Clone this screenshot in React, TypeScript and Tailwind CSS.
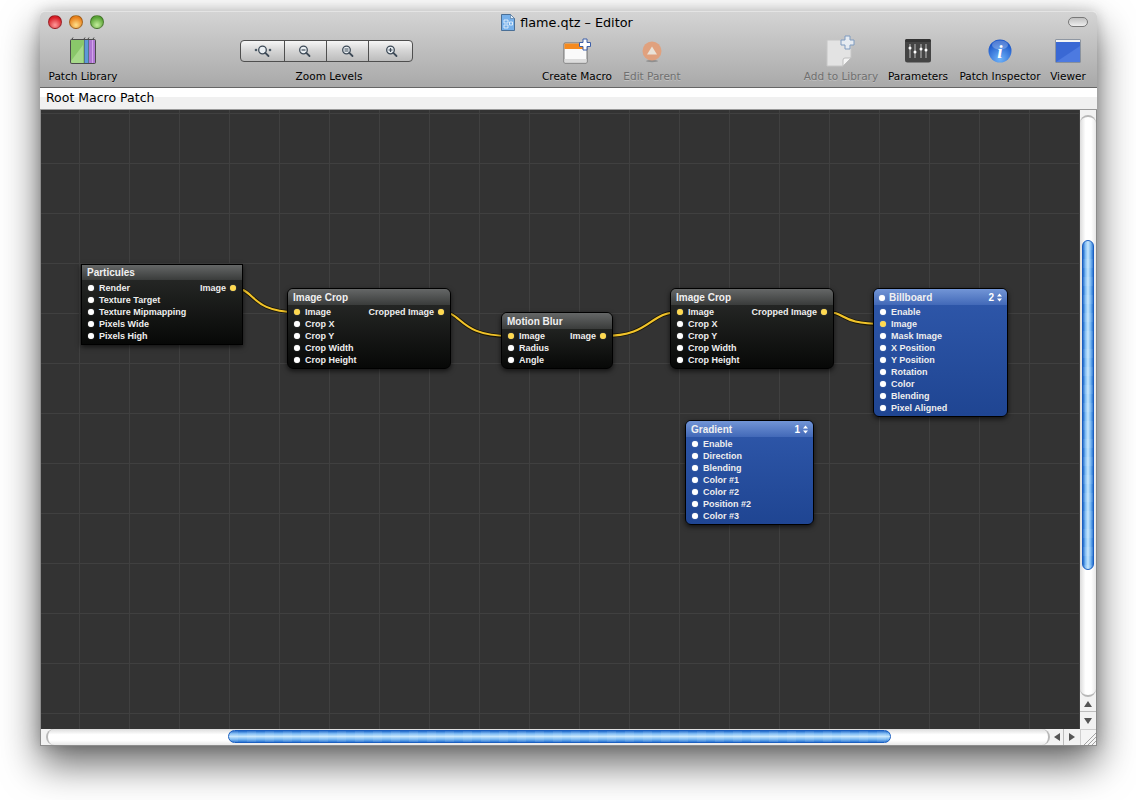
const uiFont = "[font-family:'DejaVu_Sans',sans-serif]";

type PatchNode = {
  title: string;
  pos: string;
  blue?: boolean;
  square?: boolean;
  titleDot?: boolean;
  badge?: string;
  inputs: string[];
  hotInputs?: string[];
  output?: string;
};

const nodes: PatchNode[] = [
  {
    title: "Particules",
    pos: "left-[40px] top-[154px] w-[162px] h-[81px]",
    square: true,
    inputs: ["Render", "Texture Target", "Texture Mipmapping", "Pixels Wide", "Pixels High"],
    output: "Image",
  },
  {
    title: "Image Crop",
    pos: "left-[246px] top-[178px] w-[164px] h-[81px]",
    inputs: ["Image", "Crop X", "Crop Y", "Crop Width", "Crop Height"],
    hotInputs: ["Image"],
    output: "Cropped Image",
  },
  {
    title: "Motion Blur",
    pos: "left-[460px] top-[202px] w-[112px] h-[57px]",
    inputs: ["Image", "Radius", "Angle"],
    hotInputs: ["Image"],
    output: "Image",
  },
  {
    title: "Image Crop",
    pos: "left-[629px] top-[178px] w-[164px] h-[81px]",
    inputs: ["Image", "Crop X", "Crop Y", "Crop Width", "Crop Height"],
    hotInputs: ["Image"],
    output: "Cropped Image",
  },
  {
    title: "Billboard",
    pos: "left-[832px] top-[178px] w-[135px] h-[129px]",
    blue: true,
    titleDot: true,
    badge: "2",
    inputs: ["Enable", "Image", "Mask Image", "X Position", "Y Position", "Rotation", "Color", "Blending", "Pixel Aligned"],
    hotInputs: ["Image"],
  },
  {
    title: "Gradient",
    pos: "left-[644px] top-[310px] w-[129px] h-[105px]",
    blue: true,
    badge: "1",
    inputs: ["Enable", "Direction", "Blending", "Color #1", "Color #2", "Position #2", "Color #3"],
  },
];

function Port({ hot }: { hot?: boolean }) {
  return (
    <span
      className={`h-[6px] w-[6px] shrink-0 rounded-full ${
        hot ? "bg-[#ffd94f]" : "bg-white"
      } shadow-[0_0_1px_rgba(255,255,255,0.6)]`}
    />
  );
}

function Node({ node }: { node: PatchNode }) {
  const body = node.blue
    ? "bg-[linear-gradient(#2f58ab,#1f4592)]"
    : "bg-[linear-gradient(#2b2d2b,#070807)]";
  const head = node.blue
    ? "bg-[linear-gradient(#7295d6,#4269b8)]"
    : "bg-[linear-gradient(#656767,#3a3c3b)]";
  return (
    <div
      className={`absolute ${node.pos} ${body} ${
        node.square ? "" : "rounded-[6px]"
      } overflow-hidden border border-black font-['Liberation_Sans',sans-serif] text-[9px] font-bold text-[#eeeeee] shadow-[0_2px_5px_rgba(0,0,0,0.65)]`}
    >
      <div className={`flex ${node.square ? "h-[15px]" : "h-[16px] pt-[1px]"} items-center gap-[4px] px-[5px] ${head}`}>
        {node.titleDot && <Port />}
        <span className="text-[10px] leading-none text-[#f0f0f0]">{node.title}</span>
        {node.badge && (
          <span className="ml-auto flex items-center gap-[3px] text-[10px] leading-none text-white">
            {node.badge}
            <svg width="5" height="9" viewBox="0 0 5 9" fill="#fff">
              <path d="M2.5 0.5 5 3.5H0zM2.5 8.5 0 5.5H5z" />
            </svg>
          </span>
        )}
      </div>
      <div className={`flex justify-between ${node.square ? "pt-[2px]" : "pt-[1px]"} pl-[6px] pr-[6px]`}>
        <div className="flex flex-col">
          {node.inputs.map((name) => (
            <div key={name} className="flex h-[12px] items-center gap-[5px] leading-none">
              <Port hot={node.hotInputs?.includes(name)} />
              <span>{name}</span>
            </div>
          ))}
        </div>
        {node.output && (
          <div className="flex h-[12px] items-center gap-[4px] leading-none">
            <span>{node.output}</span>
            <Port hot />
          </div>
        )}
      </div>
    </div>
  );
}

function Connections() {
  const wires = [
    "M234 288C255 288 250 312 296 312",
    "M442 312C463 312 458 336 510 336",
    "M604 336C652 336 648 312 680 312",
    "M825 312C848 312 838 324 883 324",
  ];
  return (
    <svg className="absolute inset-0 h-full w-full" viewBox="41 110 1039 619" fill="none">
      {wires.map((d) => (
        <g key={d}>
          <path d={d} stroke="#1a1608" strokeWidth="3.8" />
          <path d={d} stroke="#f2c42a" strokeWidth="2.1" />
        </g>
      ))}
    </svg>
  );
}

function ZoomGlyph({ mark }: { mark: "fit" | "minus" | "equal" | "plus" }) {
  return (
    <svg width="20" height="14" viewBox="0 0 20 14" fill="none" stroke="#3d4a57">
      <circle cx="9.5" cy="6" r="3.8" strokeWidth="1.3" fill="#e9eef2" />
      <path d="M12.3 8.8 15.5 12" strokeWidth="1.8" strokeLinecap="round" />
      {mark === "minus" && <path d="M7.5 6h4" strokeWidth="1.2" />}
      {mark === "equal" && <path d="M7.5 5h4M7.5 7h4" strokeWidth="1.1" />}
      {mark === "plus" && <path d="M7.5 6h4M9.5 4v4" strokeWidth="1.2" />}
      {mark === "fit" && (
        <>
          <circle cx="3" cy="6" r="1.3" fill="#4c5a66" stroke="none" />
          <circle cx="17" cy="6" r="1.3" fill="#4c5a66" stroke="none" />
        </>
      )}
    </svg>
  );
}

function LibraryIcon() {
  return (
    <svg width="28" height="28" viewBox="0 0 28 28">
      <path d="M3 2l1-1.500M15 2l1-1.500M19 2l1-1.500M24 2l1-1.500" stroke="#444" strokeWidth="1" />
      <rect x="1" y="2" width="26" height="25" rx="2" fill="#4b4b4b" />
      <path d="M2 3h13v23H3.500Q2 26 2 24.500z" fill="#8ac76a" />
      <path d="M2 24 14 8v18H3.500Q2 26 2 24.500z" fill="#a7d98a" />
      <rect x="15.500" y="3" width="4" height="23" fill="#5c9ad8" />
      <rect x="20" y="3" width="6" height="23" fill="#b076d2" />
      <path d="M23 3h1v23h-1z" fill="#d0a4ea" />
    </svg>
  );
}

function MacroIcon() {
  return (
    <svg width="28" height="26" viewBox="0 0 28 26">
      <rect x="1" y="5" width="23" height="20" rx="1" fill="#fafafa" stroke="#555" strokeWidth="0.8" />
      <path d="M1.400 5.500h22.200v5.500H1.400z" fill="#f58a1f" />
      <path d="M1.400 21h22.200v3.600H1.400z" fill="#dcdcdc" />
      <path d="M20 1h4v3.500h3.500v4H24V12h-4V8.500h-3.500v-4H20z" fill="#fff" stroke="#3d5fa8" strokeWidth="1" />
    </svg>
  );
}

function ParentIcon() {
  return (
    <svg className="mt-[3px]" width="20" height="22" viewBox="0 0 20 22">
      <ellipse cx="10" cy="20" rx="6" ry="1.200" fill="#8f8f8f" />
      <circle cx="10" cy="10" r="9.500" fill="#e0a17e" />
      <path d="M10 5.500 15 13.500H5z" fill="#e9e2d8" />
    </svg>
  );
}

function AddLibraryIcon() {
  return (
    <svg width="30" height="32" viewBox="0 0 30 32">
      <path d="M1 5h24v18l-8 8H1z" fill="#e3e3e3" stroke="#c6c6c6" />
      <path d="M17 31v-6q0-2 2-2h6z" fill="#f4f4f4" stroke="#bdbdbd" />
      <path d="M19 1h5v4h4v5h-4v4h-5v-4h-4V5h4z" fill="#e6ebf1" stroke="#7f9bc0" />
    </svg>
  );
}

function ParametersIcon() {
  return (
    <svg width="26" height="24" viewBox="0 0 26 24">
      <rect width="26" height="23.500" rx="2.500" fill="#444" />
      <rect width="26" height="3" rx="1.500" fill="#333" />
      <path d="M5 5v14M10 5v14M16 5v14M21 5v14" stroke="#ddd" strokeWidth="0.8" />
      <circle cx="5" cy="9" r="1.500" fill="#fff" />
      <circle cx="10" cy="13" r="1.500" fill="#fff" />
      <circle cx="16" cy="10" r="1.500" fill="#fff" />
      <circle cx="21" cy="11" r="1.500" fill="#fff" />
    </svg>
  );
}

function InfoIcon() {
  return (
    <svg width="24" height="24" viewBox="0 0 24 24">
      <defs>
        <radialGradient id="infoBlue" cx="50%" cy="85%" r="75%">
          <stop offset="0" stopColor="#6fb4fa" />
          <stop offset="1" stopColor="#1a55c8" />
        </radialGradient>
      </defs>
      <circle cx="12" cy="12" r="11.500" fill="url(#infoBlue)" />
      <ellipse cx="12" cy="6" rx="8" ry="4.500" fill="#fff" opacity="0.25" />
      <text x="12" y="19" textAnchor="middle" fontFamily="Liberation Serif, serif" fontStyle="italic" fontWeight="700" fontSize="19" fill="#fff">
        i
      </text>
    </svg>
  );
}

function ViewerIcon() {
  return (
    <svg width="26" height="24" viewBox="0 0 26 24">
      <rect x="0.500" y="0.500" width="25" height="23" fill="#5b6a80" />
      <rect x="1" y="1" width="24" height="2" fill="#f4f4f4" />
      <rect x="1" y="3" width="24" height="20" fill="#3a68d4" />
      <path d="M1 23 25 7v16z" fill="#4d7ae0" />
    </svg>
  );
}

function DocIcon() {
  return (
    <svg width="14" height="17" viewBox="0 0 14 17">
      <path d="M.5.500h9l4 4v12H.500z" fill="#76b0ea" stroke="#4a6f96" />
      <path d="M9.500.500v4h4z" fill="#e4f0fb" stroke="#4a6f96" strokeWidth="0.600" />
      <path d="M3 6h4v3H3zM3 11h4v3H3zM8.500 8h3v3h-3z" fill="none" stroke="#e8f2fc" strokeWidth="0.900" />
    </svg>
  );
}

function ToolItem({
  label,
  width,
  dim,
  children,
}: {
  label: string;
  width: string;
  dim?: boolean;
  children: React.ReactNode;
}) {
  return (
    <div className={`flex flex-col items-center ${width}`}>
      <div className="flex h-[33px] items-center justify-center">{children}</div>
      <span
        className={`mt-[2px] whitespace-nowrap text-[10.5px] leading-[14px] ${
          dim ? "text-[#6f6f6f]" : "text-black"
        } [text-shadow:0_1px_0_rgba(255,255,255,0.25)]`}
      >
        {label}
      </span>
    </div>
  );
}

function Light({ color }: { color: string }) {
  return <span className={`h-[14px] w-[14px] rounded-full border border-[#0000004d] ${color}`} />;
}

const knobV =
  "bg-[repeating-linear-gradient(rgba(255,255,255,0.08)_0_9px,transparent_9px_18px),linear-gradient(90deg,#1c66c8,#7ebcf5_25%,#c4e5fc_50%,#7ab9f2_75%,#2a74d2)]";
const knobH =
  "bg-[repeating-linear-gradient(90deg,rgba(255,255,255,0.08)_0_9px,transparent_9px_18px),linear-gradient(#1c66c8,#7ebcf5_25%,#c4e5fc_50%,#7ab9f2_75%,#2a74d2)]";
const trackV = "bg-[linear-gradient(90deg,#dcdcdc,#ffffff_35%,#ffffff_70%,#e8e8e8)]";
const trackH = "bg-[linear-gradient(#dcdcdc,#ffffff_35%,#ffffff_70%,#e8e8e8)]";

function Arrow({ d }: { d: string }) {
  return (
    <svg width="8" height="8" viewBox="0 0 8 8" fill="#555">
      <path d={d} />
    </svg>
  );
}

export default function App() {
  return (
    <div className={`h-[800px] w-[1136px] overflow-hidden bg-white pl-[40px] pt-[11px] ${uiFont}`}>
      <div className="flex h-[735px] w-[1057px] flex-col rounded-t-[5px] shadow-[0_18px_38px_rgba(0,0,0,0.6),0_0_14px_rgba(0,0,0,0.18)]">
        {/* title bar and toolbar */}
        <div className="h-[76px] rounded-t-[5px] border-t border-[#e4e4e4] bg-[linear-gradient(#d4d4d4,#a9a9a9)]">
          <div className="grid h-[20px] grid-cols-[1fr_auto_1fr] items-center pl-[8px] pr-[8px]">
            <div className="flex gap-[7px]">
              <Light color="bg-[radial-gradient(circle_at_50%_75%,#ff9a9a,#d81e26_70%)]" />
              <Light color="bg-[radial-gradient(circle_at_50%_75%,#ffe08a,#e8801a_70%)]" />
              <Light color="bg-[radial-gradient(circle_at_50%_75%,#c4ee9c,#5aa436_70%)]" />
            </div>
            <div className="flex items-center gap-[5px] pr-[3px] pt-[1px] text-[12.8px] text-black">
              <DocIcon />
              <span>flame.qtz – Editor</span>
            </div>
            <span className="mr-[1px] h-[10px] w-[20px] justify-self-end rounded-full border border-[#777] bg-[linear-gradient(#c0c0c0,#eeeeee)]" />
          </div>
          <div className="flex pl-[3px] pt-[2px]">
            <ToolItem label="Patch Library" width="w-[80px]">
              <LibraryIcon />
            </ToolItem>
            <div className="ml-[117px] flex w-[173px] flex-col items-center">
              <div className="flex h-[33px] items-center">
                <div className="flex h-[22px] w-[173px] rounded-[4px] border border-[#4f4f4f] bg-[linear-gradient(#f6f6f6,#d4d4d4_50%,#bcbcbc)]">
                  <div className="flex w-[44px] items-center justify-center border-r border-[#4f4f4f]">
                    <ZoomGlyph mark="fit" />
                  </div>
                  <div className="flex w-[42px] items-center justify-center border-r border-[#4f4f4f] pr-[3px]">
                    <ZoomGlyph mark="minus" />
                  </div>
                  <div className="flex w-[42px] items-center justify-center border-r border-[#4f4f4f] pr-[1px]">
                    <ZoomGlyph mark="equal" />
                  </div>
                  <div className="flex flex-1 items-center justify-center">
                    <ZoomGlyph mark="plus" />
                  </div>
                </div>
              </div>
              <span className="mt-[2px] pl-[5px] text-[10.5px] leading-[14px] text-black">Zoom Levels</span>
            </div>
            <div className="ml-[124px]">
              <ToolItem label="Create Macro" width="w-[80px]">
                <MacroIcon />
              </ToolItem>
            </div>
            <ToolItem label="Edit Parent" width="w-[70px]" dim>
              <ParentIcon />
            </ToolItem>
            <div className="ml-[112px]">
              <ToolItem label="Add to Library" width="w-[84px]" dim>
                <AddLibraryIcon />
              </ToolItem>
            </div>
            <ToolItem label="Parameters" width="w-[70px]">
              <ParametersIcon />
            </ToolItem>
            <ToolItem label="Patch Inspector" width="w-[94px]">
              <InfoIcon />
            </ToolItem>
            <ToolItem label="Viewer" width="w-[42px]">
              <ViewerIcon />
            </ToolItem>
          </div>
        </div>

        {/* breadcrumb */}
        <div className="flex h-[23px] items-center border-y border-[#666] border-b-[#9a9a9a] bg-[linear-gradient(#ffffff_45%,#f0f0f0_45%)] pb-[1px] pl-[6px] text-[12.5px] text-black">
          Root Macro Patch
        </div>

        {/* canvas and vertical scroller */}
        <div className="flex min-h-0 flex-1 border-x border-[#8c8c8c]">
          <div className="relative flex-1 overflow-hidden bg-[#333333] bg-[linear-gradient(#404040_1px,transparent_1px),linear-gradient(90deg,#404040_1px,transparent_1px)] bg-size-[50px_50px] bg-position-[38px_3px]">
            <Connections />
            {nodes.map((node) => (
              <Node key={node.pos} node={node} />
            ))}
          </div>
          <div className="flex w-[16px] flex-col bg-[#f2f2f2] pt-[5px]">
            <div className={`min-h-0 flex-1 rounded-[8px] border-y-2 border-[#b8b8b8] ${trackV}`}>
              <div className={`ml-[2px] mt-[123px] h-[330px] w-[12px] rounded-full border border-[#1b5fc0] ${knobV}`} />
            </div>
            <div className="flex h-[15px] w-full shrink-0 items-center justify-center border-b border-[#bdbdbd]">
              <Arrow d="M4 1 8 7H0z" />
            </div>
            <div className="flex h-[17px] w-full shrink-0 items-center justify-center">
              <Arrow d="M4 7 0 1H8z" />
            </div>
          </div>
        </div>

        {/* horizontal scroller */}
        <div className="flex h-[17px] border-x border-b border-[#8c8c8c]">
          <div className="flex flex-1 bg-[#f2f2f2] pl-[5px]">
            <div className={`flex-1 rounded-[8px] border-x-2 border-[#b8b8b8] ${trackH}`}>
              <div className={`ml-[180px] mt-[1px] h-[13px] w-[663px] rounded-full border border-[#1b5fc0] ${knobH}`} />
            </div>
            <div className="flex w-[14px] items-center justify-center border-r border-[#bdbdbd]">
              <Arrow d="M1 4 7 0V8z" />
            </div>
            <div className="flex w-[16px] items-center justify-center">
              <Arrow d="M7 4 1 8V0z" />
            </div>
          </div>
          <div className="flex w-[16px] items-end justify-end border-l border-t border-[#cfcfcf] bg-[#f4f4f4]">
            <svg width="13" height="13" viewBox="0 0 13 13" stroke="#9a9a9a" strokeWidth="0.9">
              <path d="M1 13 13 1M5 13l8-8M9 13l4-4" />
            </svg>
          </div>
        </div>
      </div>
    </div>
  );
}
